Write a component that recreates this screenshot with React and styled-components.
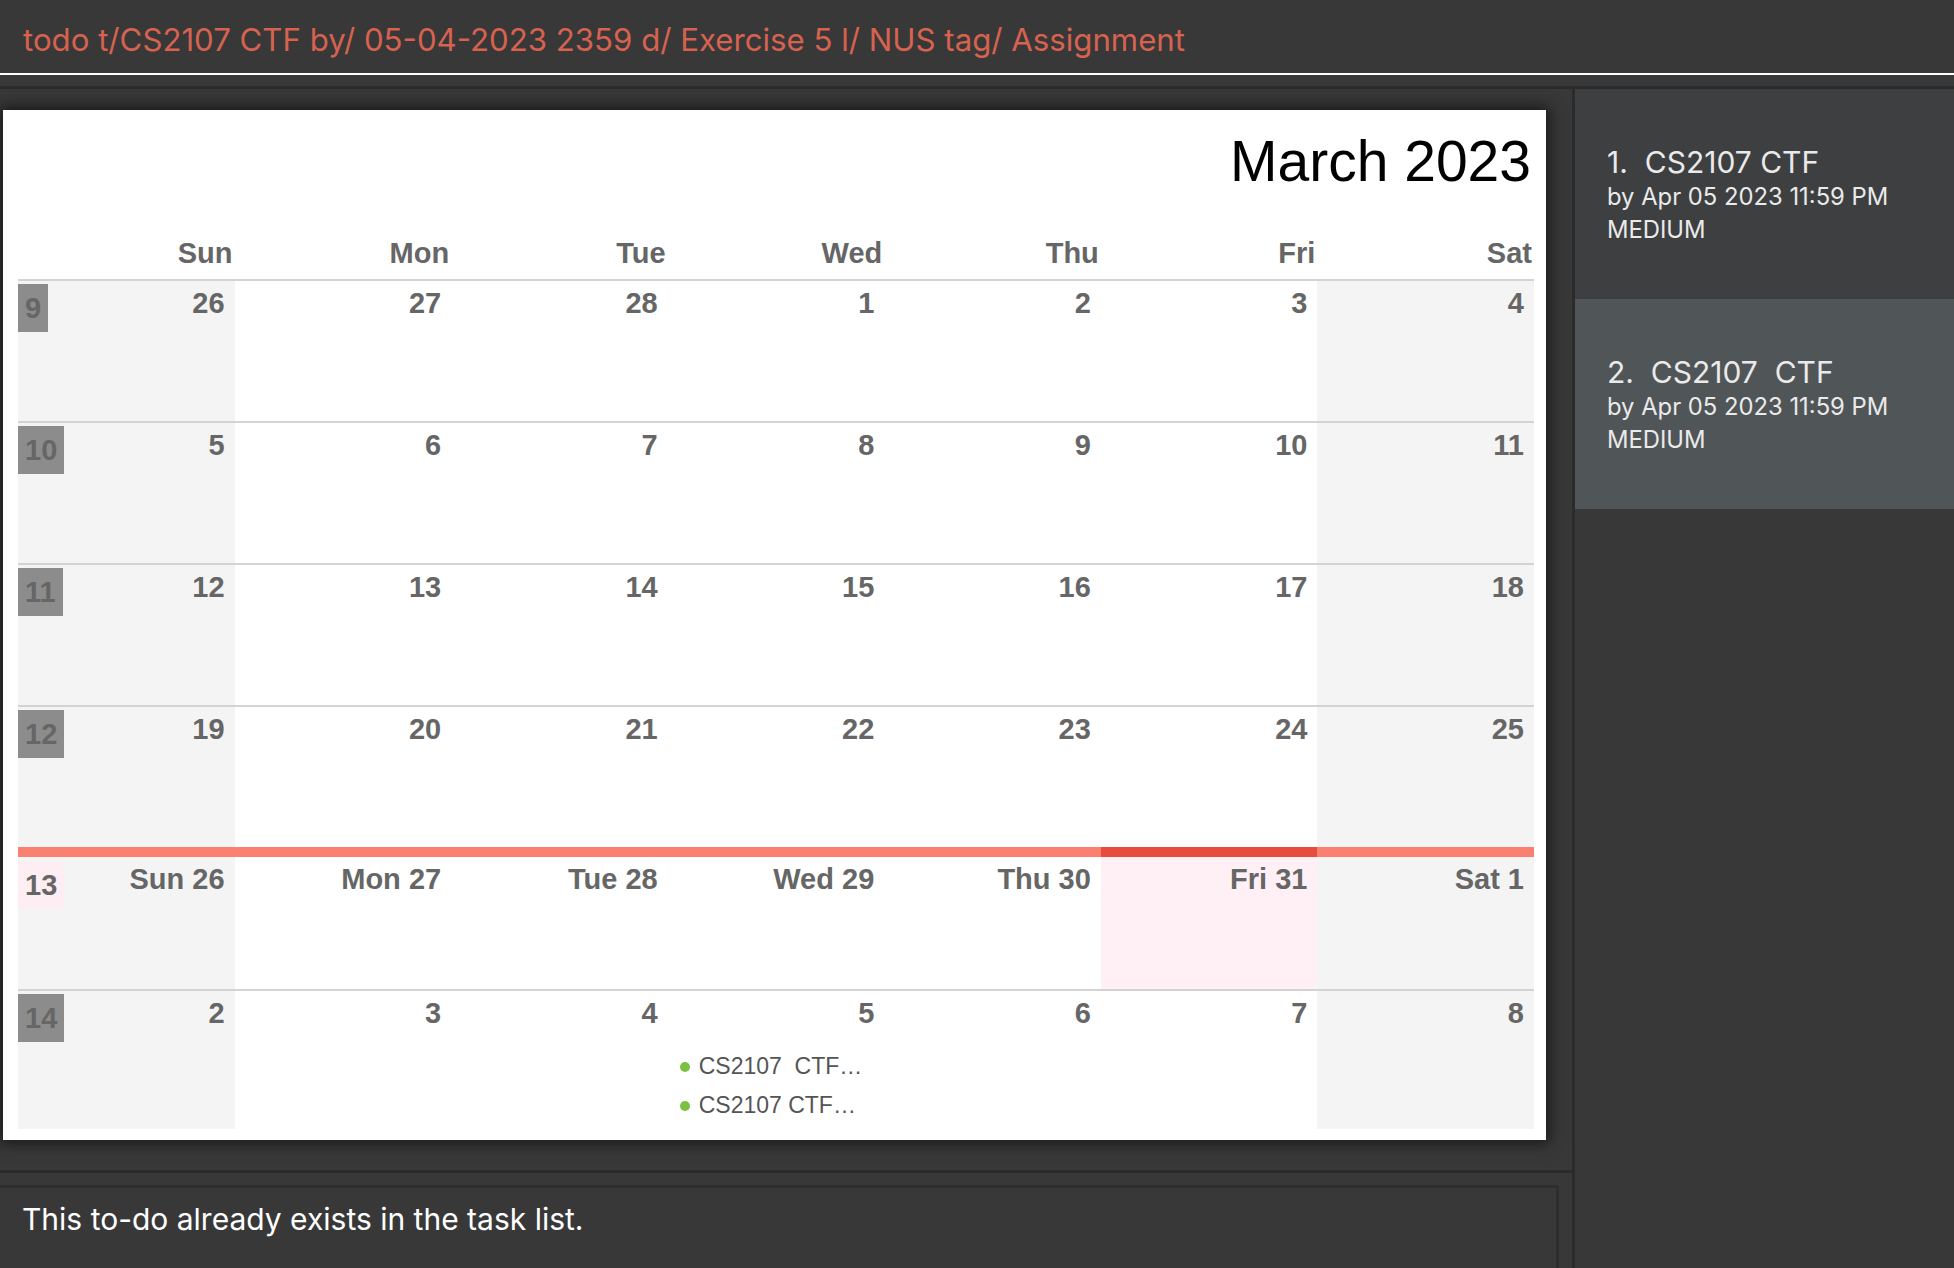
import React from "react";
import styled, { createGlobalStyle } from "styled-components";

const GlobalStyle = createGlobalStyle`
  html, body {
    margin: 0;
    padding: 0;
    background: #383838;
    overflow: hidden;
  }
  * {
    box-sizing: border-box;
  }
`;

const Window = styled.div`
  width: 1954px;
  height: 1268px;
  display: flex;
  flex-direction: column;
  background: #383838;
`;

const CommandBar = styled.div`
  height: 75px;
  padding: 20px 0 0 23px;
  border-bottom: 2px solid #ffffff;
  font-family: Inter, "Noto Sans", sans-serif;
  font-size: 31.2px;
  line-height: 40px;
  color: #d6624f;
  white-space: pre;
`;

const Band = styled.div`
  margin-top: 11px;
  height: 3px;
  background: #2b2b2b;
`;

const Main = styled.div`
  flex: 1;
  display: flex;
  min-height: 0;
`;

const LeftColumn = styled.div`
  width: 1572px;
  display: flex;
  flex-direction: column;
`;

const CalendarArea = styled.div`
  height: 1081px;
  padding: 21px 0 0 3px;
`;

const Panel = styled.div`
  width: 1543px;
  height: 1030px;
  background: #ffffff;
  box-shadow: 0 0 14px 3px rgba(0, 0, 0, 0.6);
  padding: 23px 12px 0 15px;
  font-family: "Liberation Sans", Arial, sans-serif;
`;

const Title = styled.div`
  height: 57px;
  line-height: 57px;
  font-size: 57px;
  color: #000;
  text-align: right;
  padding-right: 3px;
`;

const HeaderRow = styled.div`
  display: grid;
  grid-template-columns: repeat(7, 1fr);
  height: 89px;
  align-items: end;
  padding-bottom: 11px;
`;

const HeaderCell = styled.div`
  font-size: 29px;
  line-height: 29px;
  font-weight: bold;
  color: #666;
  text-align: right;
  padding-right: 2px;
`;

const WeekRow = styled.div`
  display: grid;
  grid-template-columns: repeat(7, 1fr);
  height: ${(p) => p.$height || 142}px;
`;

const DayCell = styled.div`
  position: relative;
  border-top: ${(p) => (p.$bar ? `10px solid ${p.$bar}` : "2px solid #d3d3d3")};
  background: ${(p) => p.$bg || "#ffffff"};
  padding: 8px 10px 0 0;
  display: flex;
  flex-direction: column;
`;

const DayNumber = styled.div`
  font-size: 29px;
  line-height: 29px;
  font-weight: bold;
  color: #666;
  text-align: right;
`;

const WeekBadge = styled.div`
  position: absolute;
  left: 0;
  top: ${(p) => (p.$current ? 4 : 3)}px;
  height: 48px;
  padding: 0 7px;
  display: flex;
  align-items: center;
  background: ${(p) => (p.$current ? "#fdeef3" : "#8c8c8c")};
  font-size: 29px;
  font-weight: bold;
  color: #666;
`;

const EventList = styled.div`
  margin-top: 19px;
  padding-left: 12px;
`;

const EventItem = styled.div`
  display: flex;
  align-items: center;
  gap: 9px;
  height: 39px;
  font-size: 23px;
  color: #555;
  white-space: pre;
`;

const Dot = styled.span`
  width: 10px;
  height: 10px;
  border-radius: 50%;
  background: #7ac142;
  flex: none;
`;

const Separator = styled.div`
  height: 3px;
  background: #2b2b2b;
`;

const ResultArea = styled.div`
  flex: 1;
  padding-top: 12px;
`;

const ResultBox = styled.div`
  width: 1559px;
  height: 100%;
  border-top: 3px solid #2e2e2e;
  border-right: 3px solid #2e2e2e;
  padding: 13px 0 0 22px;
  font-family: Inter, "Noto Sans", sans-serif;
  font-size: 30px;
  line-height: 36px;
  color: #ffffff;
`;

const Sidebar = styled.div`
  flex: 1;
  border-left: 3px solid #2b2b2b;
  display: flex;
  flex-direction: column;
`;

const TaskCard = styled.div`
  height: 210px;
  padding: 55px 0 0 32px;
  background: ${(p) => (p.$selected ? "#505558" : "#3d3f41")};
  font-family: Inter, "Noto Sans", sans-serif;
  color: #eaeaea;
`;

const TaskTitle = styled.div`
  font-size: 30px;
  line-height: 36px;
  white-space: pre;
`;

const TaskLine = styled.div`
  font-size: 23.8px;
  line-height: 33px;
  &:first-of-type {
    margin-top: 2px;
  }
`;

const DAYS = ["Sun", "Mon", "Tue", "Wed", "Thu", "Fri", "Sat"];

const weeks = [
  { no: 9, days: [26, 27, 28, 1, 2, 3, 4] },
  { no: 10, days: [5, 6, 7, 8, 9, 10, 11] },
  { no: 11, days: [12, 13, 14, 15, 16, 17, 18] },
  { no: 12, days: [19, 20, 21, 22, 23, 24, 25] },
  {
    no: 13,
    current: true,
    days: ["Sun 26", "Mon 27", "Tue 28", "Wed 29", "Thu 30", "Fri 31", "Sat 1"],
  },
  {
    no: 14,
    days: [2, 3, 4, 5, 6, 7, 8],
    events: { 3: ["CS2107  CTF…", "CS2107 CTF…"] },
  },
];

const tasks = [
  { title: "1.  CS2107 CTF", by: "by Apr 05 2023 11:59 PM", priority: "MEDIUM" },
  { title: "2.  CS2107  CTF", by: "by Apr 05 2023 11:59 PM", priority: "MEDIUM", selected: true },
];

function cellBackground(week, i) {
  if (week.current && i === 5) return "#fff0f5";
  if (i === 0 || i === 6) return "#f4f4f4";
  return "#ffffff";
}

function cellBar(week, i) {
  if (!week.current) return null;
  return i === 5 ? "#e74c3c" : "#fa8072";
}

const App = () => {
  return (
    <Window>
      <GlobalStyle />
      <CommandBar>todo t/CS2107 CTF by/ 05-04-2023 2359 d/ Exercise 5 l/ NUS tag/ Assignment</CommandBar>
      <Band />
      <Main>
        <LeftColumn>
          <CalendarArea>
            <Panel>
              <Title>March 2023</Title>
              <HeaderRow>
                {DAYS.map((d) => (
                  <HeaderCell key={d}>{d}</HeaderCell>
                ))}
              </HeaderRow>
              {weeks.map((week, w) => (
                <WeekRow key={week.no} $height={w === weeks.length - 1 ? 140 : 142}>
                  {week.days.map((day, i) => (
                    <DayCell key={i} $bg={cellBackground(week, i)} $bar={cellBar(week, i)}>
                      {i === 0 && <WeekBadge $current={week.current}>{week.no}</WeekBadge>}
                      <DayNumber>{day}</DayNumber>
                      {week.events && week.events[i] && (
                        <EventList>
                          {week.events[i].map((e, k) => (
                            <EventItem key={k}>
                              <Dot />
                              {e}
                            </EventItem>
                          ))}
                        </EventList>
                      )}
                    </DayCell>
                  ))}
                </WeekRow>
              ))}
            </Panel>
          </CalendarArea>
          <Separator />
          <ResultArea>
            <ResultBox>This to-do already exists in the task list.</ResultBox>
          </ResultArea>
        </LeftColumn>
        <Sidebar>
          {tasks.map((t) => (
            <TaskCard key={t.title} $selected={t.selected}>
              <TaskTitle>{t.title}</TaskTitle>
              <TaskLine>{t.by}</TaskLine>
              <TaskLine>{t.priority}</TaskLine>
            </TaskCard>
          ))}
        </Sidebar>
      </Main>
    </Window>
  );
};

export default App;
